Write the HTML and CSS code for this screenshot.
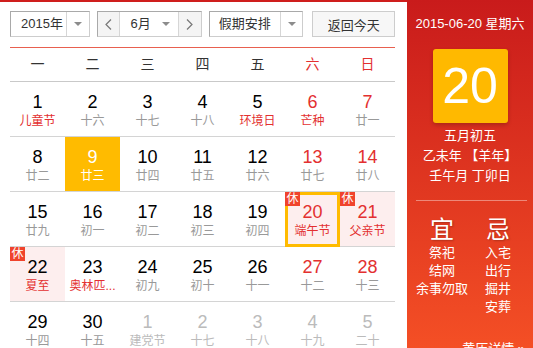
FILE: index.html
```html
<!DOCTYPE html>
<html lang="zh-CN">
<head>
    <meta charset="UTF-8">
    <meta name="viewport" content="width=device-width, initial-scale=1.0">
    <title>万年历</title>
    <link rel="stylesheet" href="styles.css">
</head>
<body>
    <div class="calendar">
        <div class="main">
            <div class="toolbar">
                <div class="select year-select">
                    <span class="select-text">2015年</span>
                    <span class="select-arrow"><i class="caret"></i></span>
                </div>
                <div class="month-picker">
                    <span class="month-btn">
                        <svg width="7" height="11" viewBox="0 0 7 11"><polyline points="6,0.5 1,5.5 6,10.5" fill="none" stroke="#777" stroke-width="1.2"/></svg>
                    </span>
                    <span class="month-text">6月<i class="caret"></i></span>
                    <span class="month-btn">
                        <svg width="7" height="11" viewBox="0 0 7 11"><polyline points="1,0.5 6,5.5 1,10.5" fill="none" stroke="#777" stroke-width="1.2"/></svg>
                    </span>
                </div>
                <div class="select holiday-select">
                    <span class="select-text">假期安排</span>
                    <span class="select-arrow"><i class="caret"></i></span>
                </div>
                <button class="today-btn">返回今天</button>
            </div>

            <div class="weekdays">
                <span>一</span><span>二</span><span>三</span><span>四</span><span>五</span>
                <span class="red">六</span><span class="red">日</span>
            </div>

            <div class="days">
                <!-- 第一周 -->
                <div class="day"><span class="num">1</span><span class="lunar red">儿童节</span></div>
                <div class="day"><span class="num">2</span><span class="lunar">十六</span></div>
                <div class="day"><span class="num">3</span><span class="lunar">十七</span></div>
                <div class="day"><span class="num">4</span><span class="lunar">十八</span></div>
                <div class="day"><span class="num">5</span><span class="lunar red">环境日</span></div>
                <div class="day weekend"><span class="num">6</span><span class="lunar red">芒种</span></div>
                <div class="day weekend"><span class="num">7</span><span class="lunar">廿一</span></div>

                <!-- 第二周 -->
                <div class="day"><span class="num">8</span><span class="lunar">廿二</span></div>
                <div class="day selected"><span class="num">9</span><span class="lunar">廿三</span></div>
                <div class="day"><span class="num">10</span><span class="lunar">廿四</span></div>
                <div class="day"><span class="num">11</span><span class="lunar">廿五</span></div>
                <div class="day"><span class="num">12</span><span class="lunar">廿六</span></div>
                <div class="day weekend"><span class="num">13</span><span class="lunar">廿七</span></div>
                <div class="day weekend"><span class="num">14</span><span class="lunar">廿八</span></div>

                <!-- 第三周 -->
                <div class="day"><span class="num">15</span><span class="lunar">廿九</span></div>
                <div class="day"><span class="num">16</span><span class="lunar">初一</span></div>
                <div class="day"><span class="num">17</span><span class="lunar">初二</span></div>
                <div class="day"><span class="num">18</span><span class="lunar">初三</span></div>
                <div class="day"><span class="num">19</span><span class="lunar">初四</span></div>
                <div class="day weekend rest today"><i class="rest-badge">休</i><span class="num">20</span><span class="lunar red">端午节</span></div>
                <div class="day weekend rest"><i class="rest-badge">休</i><span class="num">21</span><span class="lunar red">父亲节</span></div>

                <!-- 第四周 -->
                <div class="day rest"><i class="rest-badge">休</i><span class="num">22</span><span class="lunar red">夏至</span></div>
                <div class="day"><span class="num">23</span><span class="lunar red">奥林匹...</span></div>
                <div class="day"><span class="num">24</span><span class="lunar">初九</span></div>
                <div class="day"><span class="num">25</span><span class="lunar">初十</span></div>
                <div class="day"><span class="num">26</span><span class="lunar">十一</span></div>
                <div class="day weekend"><span class="num">27</span><span class="lunar">十二</span></div>
                <div class="day weekend"><span class="num">28</span><span class="lunar">十三</span></div>

                <!-- 第五周 -->
                <div class="day"><span class="num">29</span><span class="lunar">十四</span></div>
                <div class="day"><span class="num">30</span><span class="lunar">十五</span></div>
                <div class="day other"><span class="num">1</span><span class="lunar">建党节</span></div>
                <div class="day other"><span class="num">2</span><span class="lunar">十七</span></div>
                <div class="day other"><span class="num">3</span><span class="lunar">十八</span></div>
                <div class="day other"><span class="num">4</span><span class="lunar">十九</span></div>
                <div class="day other"><span class="num">5</span><span class="lunar">二十</span></div>
            </div>
        </div>

        <div class="side">
            <div class="side-date">2015-06-20 星期六</div>
            <div class="today-box">20</div>
            <div class="lunar-info">
                <p>五月初五</p>
                <p>乙未年 【羊年】</p>
                <p>壬午月 丁卯日</p>
            </div>
            <div class="side-line"></div>
            <div class="advice">
                <div class="advice-col">
                    <div class="advice-title">宜</div>
                    <p>祭祀</p>
                    <p>结网</p>
                    <p>余事勿取</p>
                </div>
                <div class="advice-col">
                    <div class="advice-title">忌</div>
                    <p>入宅</p>
                    <p>出行</p>
                    <p>掘井</p>
                    <p>安葬</p>
                </div>
            </div>
            <div class="side-more">黄历详情 »</div>
        </div>
    </div>
</body>
</html>
```

FILE: styles.css
```css
* {
    margin: 0;
    padding: 0;
    box-sizing: border-box;
}

body {
    font-family: "Liberation Sans", "Noto Sans CJK SC", sans-serif;
    background: #fff;
    color: #333;
}

.calendar {
    display: flex;
    width: 533px;
    height: 348px;
    overflow: hidden;
}

.main {
    width: 407px;
    border-top: 2px solid #cf1e1d;
    padding: 9px 12px 0 10px;
}

/* 顶部工具栏 */
.toolbar {
    display: flex;
    height: 26px;
    font-size: 13px;
    color: #333;
}

.select,
.month-picker {
    display: flex;
    height: 26px;
    border: 1px solid;
    border-color: #a9a9a9 #cdcdcd #cdcdcd #a9a9a9;
    background: #fff;
    line-height: 24px;
}

.year-select {
    width: 80px;
    margin-right: 7px;
}

.year-select .select-text {
    width: 55px;
    padding-left: 10px;
}

.holiday-select {
    width: 95px;
    margin-right: 9px;
}

.holiday-select .select-text {
    width: 70px;
    text-align: center;
}

.select-arrow {
    flex: 1;
    display: flex;
    align-items: center;
    justify-content: center;
    border-left: 1px solid #d6d6d6;
}

.caret {
    display: inline-block;
    width: 0;
    height: 0;
    border-left: 4px solid transparent;
    border-right: 4px solid transparent;
    border-top: 4px solid #8c8c8c;
}

.month-picker {
    width: 105px;
    margin-right: 7px;
}

.month-btn {
    width: 22px;
    display: flex;
    align-items: center;
    justify-content: center;
    background: #f4f4f4;
}

.month-text {
    width: 60px;
    display: flex;
    align-items: center;
    justify-content: space-between;
    padding: 0 8px 0 10px;
    border-left: 1px solid #d6d6d6;
    border-right: 1px solid #d6d6d6;
}

.today-btn {
    width: 83px;
    height: 26px;
    border: 1px solid #cdcdcd;
    background: #f7f7f7;
    font-family: inherit;
    font-size: 13px;
    color: #333;
}

/* 星期表头 */
.weekdays {
    display: grid;
    grid-template-columns: repeat(7, 55px);
    height: 35px;
    margin-top: 10px;
    border-top: 1px solid #e8604f;
    border-bottom: 1px solid #c9c9c9;
    text-align: center;
    font-size: 14px;
    line-height: 33px;
    color: #333;
}

.red {
    color: #e33030;
}

/* 日期格子 */
.days {
    display: grid;
    grid-template-columns: repeat(7, 55px);
}

.day {
    position: relative;
    height: 55px;
    padding-top: 10px;
    border-bottom: 1px solid #d4d4d4;
    text-align: center;
}

.num {
    display: block;
    font-size: 18px;
    line-height: 20px;
    color: #000;
}

.lunar {
    display: block;
    font-size: 12px;
    line-height: 18px;
    color: #999;
}

.lunar.red {
    color: #e33030;
}

.weekend .num {
    color: #e33030;
}

.selected {
    background: #ffbb00;
}

.selected .num,
.selected .lunar {
    color: #fff;
}

.rest {
    background: #fdeeee;
}

.today::after {
    content: '';
    position: absolute;
    top: 0;
    left: 0;
    right: 0;
    bottom: -1px;
    border: 3px solid #ffbb00;
}

.rest-badge {
    position: absolute;
    top: 0;
    left: 0;
    z-index: 1;
    width: 15px;
    height: 14px;
    background: #f0432c;
    color: #fff;
    font-style: normal;
    font-size: 12px;
    line-height: 14px;
}

.other .num,
.other .lunar {
    color: #bbb;
}

/* 右侧黄历 */
.side {
    flex: 1;
    background: linear-gradient(180deg, #c91b1b 0%, #f44f25 100%);
    color: #fff;
    text-align: center;
    padding-top: 14px;
}

.side-date {
    font-size: 13px;
    line-height: 20px;
}

.today-box {
    width: 75px;
    height: 74px;
    margin: 15px auto 0;
    background: #ffb900;
    border-radius: 3px;
    box-shadow: 0 2px 4px rgba(0,0,0,0.2);
    font-size: 50px;
    line-height: 74px;
}

.lunar-info {
    margin-top: 3px;
    font-size: 13px;
    line-height: 20px;
}

.side-line {
    height: 1px;
    margin: 14px 6px 0 9px;
    background: rgba(255,255,255,0.4);
}

.advice {
    display: flex;
    justify-content: center;
    margin-top: 15px;
    font-size: 13px;
    line-height: 18px;
}

.advice-col {
    width: 56px;
}

.advice-title {
    font-size: 24px;
    line-height: 28px;
    text-shadow: 1px 1px 2px rgba(0,0,0,0.25);
}

.side-more {
    margin-top: 24px;
    padding-right: 8px;
    text-align: right;
    font-size: 13px;
    line-height: 18px;
}
```
